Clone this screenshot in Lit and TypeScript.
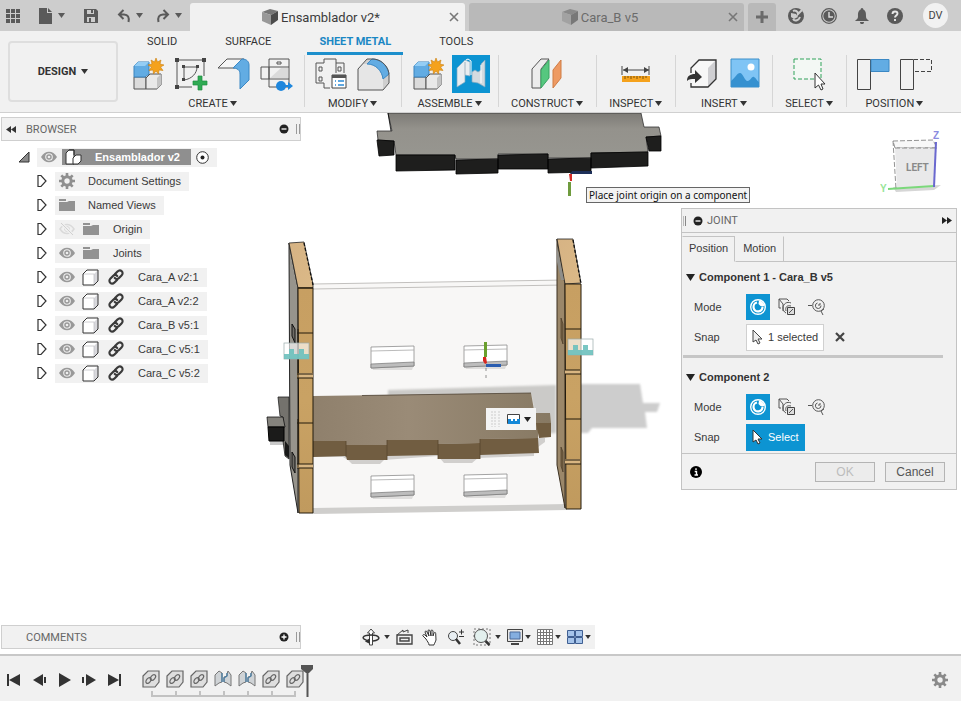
import { LitElement, html, svg, css, nothing, TemplateResult } from "lit";
import { customElement, state, property } from "lit/decorators.js";
import { classMap } from "lit/directives/class-map.js";

const icon = (w: number, h: number, body: unknown) => html`<svg
  width=${w} height=${h} viewBox="0 0 ${w} ${h}" fill="none" aria-hidden="true">${body}</svg>`;

const caret = html`<svg width="7" height="5" viewBox="0 0 7 5" aria-hidden="true"><path d="M0 0h7L3.500 5z" fill="currentColor"/></svg>`;

/* ---------- ribbon icons, drawn in a 38 x 38 box ---------- */

const newComponent = svg`
  <path d="M5 22v12h12V22z" fill="#dcdcdc" stroke="#555"/>
  <path d="M17 23l4-4h11v11l-4 4H17z" fill="#e9e9e9" stroke="#555"/>
  <path d="M28 34V23l4-4v11z" fill="#c4c4c4"/>
  <path d="M5 11l4-4h11v12l-4 3H5z" fill="#62ace3" stroke="#3a83bd"/>
  <path d="M5 11l4-4h11l-4 4z" fill="#94cdf4"/>
  <path d="M27 3l1.500 4 3.500-2-1 4 4 1-3.500 2 2.500 3.500-4-.5-.5 4-2.500-3-2.500 3-.5-4-4 .5 2.500-3.500-3.500-2 4-1-1-4 3.500 2z" fill="#f5a21c" stroke="#c97f10" stroke-width=".6"/>`;

const createSketch = svg`
  <path d="M5 5h27M5 5v27M32 5v16M5 32h15" stroke="#555"/>
  <path d="M12 25V12h13c0 6-5 12-13 13" stroke="#555"/>
  <g fill="#444"><path d="M3 3h4v4H3zM30 3h4v4h-4zM3 30h4v4H3zM10 10h3v3h-3zM24 10h3v3h-3zM10 23h3v3h-3z"/></g>
  <path d="M26 21h4v5h5v4h-5v5h-4v-5h-5v-4h5z" fill="#2fab53" stroke="#1e8c3f" stroke-width=".7"/>`;

const flange = svg`
  <path d="M3 13L12 4h17l-9 9z" fill="#f6f6f6" stroke="#555"/>
  <path d="M18 13l9-9c5 0 7 3 7 6v15l-9 9V19c0-4-3-6-7-6z" fill="#62ace3" stroke="#3b88c4"/>`;

const flatPattern = svg`
  <path d="M3 12h8v12H3zM11 4h20v28H11zM11 12h20M11 24h20" stroke="#555"/>
  <path d="M12 23l11-10h7v10z" fill="#dadada"/>
  <path d="M19 7h4v2h-4z" stroke="#555"/>
  <circle cx="23" cy="31" r="5" fill="#1f87dd"/><path d="M27 30h3v-3l5 4-5 4v-3h-3z" fill="#1f87dd"/>`;

const modifyRules = svg`
  <path d="M12 8V4h12v4h8v10M4 8h8M4 8v20h8v5h6M24 8v10" stroke="#555"/>
  <path d="M7 12h3v4H7zM7 22h3v4H7zM26 12h3v4h-3z" stroke="#555"/>
  <path d="M20 20h14v13H20z" fill="#fff" stroke="#444"/><path d="M20 20h14v3H20z" fill="#555"/>
  <path d="M23 26h1M26 26h6M23 30h1M26 30h6" stroke="#2a8ad6" stroke-width="1.500"/>`;

const fillet = svg`
  <path d="M3 14L12 4h7c9 1 15 9 15 16v8l-6 7H3z" fill="#cfcfcf"/>
  <path d="M3 14L8 9h4c9 0 15 7 16 15v11H3z" fill="#e6e6e6"/>
  <path d="M12 9l5-5c10 0 16 8 17 15l-6 5C27 16 21 9 12 9z" fill="#62ace3" stroke="#3b88c4"/>
  <path d="M3 14L12 4h7c9 1 15 9 15 16v8l-6 7H3z" stroke="#555"/>`;

const jointIcon = svg`
  <path d="M5 13l8-8 5 2v14l-5-1v7l-8 5z" fill="#e9edf0" stroke="#83a9c0" stroke-width=".7"/>
  <path d="M13 7v13" stroke="#9fb4c0"/>
  <path d="M33 32l-7-4-6-1V17l3-2 3 2 3-2V9l4-4z" fill="#d4dbe0" stroke="#83a9c0" stroke-width=".7"/>
  <path d="M29 10v18" stroke="#fff"/>
  <path d="M14 5l2-1 3 2v14" stroke="#fff"/>`;

const planeIcon = svg`
  <path d="M4 14L13 4h8l-8 10v19H4z" fill="#ececec" stroke="#555"/>
  <path d="M13 15l8-10v18l-8 10z" fill="#56c77f" stroke="#39a563"/>
  <path d="M25 15l8-10v18l-8 10z" fill="#ee9a63" stroke="#cf7c45"/>`;

const measure = svg`
  <path d="M5 11v9M32 11v9M6 15h26" stroke="#444"/>
  <path d="M6 15l5-3v6zM32 15l-5-3v6z" fill="#444"/>
  <path d="M5 21h28v6H5z" fill="#f5a21c"/>
  <path d="M8 21v3M11 21v2M14 21v3M17 21v2M20 21v3M23 21v2M26 21v3M29 21v2" stroke="#7d5208"/>`;

const insertDerive = svg`
  <path d="M8 13l8-8h17v19l-8 8H8z" fill="#f7f7f7"/>
  <path d="M25 32V13l8-8v19z" fill="#cfcfd2"/>
  <path d="M8 18v-5l8-8h17v19l-8 8H8v-4" stroke="#333" stroke-width="1.300"/>
  <path d="M4 26c0-5 3-7 8-7v-4l7 7-7 6v-4c-4 0-6 0-8 2z" fill="#333"/>`;

const canvasIcon = svg`
  <path d="M5 4h28v28H5z" fill="#7fc4f5" stroke="#3c8fc9"/>
  <circle cx="25" cy="12" r="3.500" fill="#fff"/>
  <path d="M5 26c4-3 6-8 9-8s5 9 8 8 4-5 6-4 3 4 5 5v5H5z" fill="#3691d0"/>`;

const selectIcon = svg`
  <path d="M4 4h27v20H4z" fill="#f3f8f4" stroke="#31a35a" stroke-dasharray="4 2"/>
  <path d="M25 18v15l3.500-3 2.500 5 2-1-2-5h4z" fill="#fff" stroke="#333"/>`;

const capturePos = svg`<path d="M3.500 4.500h13v30h-13z" stroke="#444"/><path d="M17 4.500h18v12H17z" fill="#62ace3" stroke="#3b88c4"/>`;
const revertPos = svg`<path d="M3.500 4.500h13v30h-13z" stroke="#444"/><path d="M17 4.500h17.500v12H17" stroke="#444" stroke-dasharray="4 2"/>`;

interface Tool { name: string; art: TemplateResult; on?: boolean }
const groups: { label: string; tools: Tool[] }[] = [
  { label: "CREATE", tools: [
    { name: "New Component", art: newComponent }, { name: "Create Sketch", art: createSketch },
    { name: "Flange", art: flange }, { name: "Flat Pattern", art: flatPattern } ] },
  { label: "MODIFY", tools: [{ name: "Sheet Metal Rules", art: modifyRules }, { name: "Fillet", art: fillet }] },
  { label: "ASSEMBLE", tools: [{ name: "New Component", art: newComponent }, { name: "Joint", art: jointIcon, on: true }] },
  { label: "CONSTRUCT", tools: [{ name: "Offset Plane", art: planeIcon }] },
  { label: "INSPECT", tools: [{ name: "Measure", art: measure }] },
  { label: "INSERT", tools: [{ name: "Insert Derive", art: insertDerive }, { name: "Canvas", art: canvasIcon }] },
  { label: "SELECT", tools: [{ name: "Select", art: selectIcon }] },
  { label: "POSITION", tools: [{ name: "Capture Position", art: capturePos }, { name: "Revert Position", art: revertPos }] },
];

/* ---------- browser tree icons ---------- */

const eye = icon(16, 12, svg`<path d="M0 6c4-7 12-7 16 0-4 7-12 7-16 0z" fill="#999"/><circle cx="8" cy="6" r="3.300" stroke="#eee" stroke-width="1.100"/><circle cx="8" cy="6" r="1.300" fill="#eee"/>`);
const eyeOff = icon(16, 14, svg`<path d="M1 7c4-6 10-6 14 0-4 6-10 6-14 0z" stroke="#dadada" stroke-width="1.500"/><circle cx="8" cy="7" r="2.500" stroke="#dadada"/><path d="M2 1l12 12" stroke="#f0f0f0" stroke-width="3"/><path d="M2 1l12 12" stroke="#d0d0d0"/>`);
const folder = icon(16, 14, svg`<path d="M0 1h7v2H0zM0 4h8l2-1h6v10H0z" fill="#929292"/>`);
const gear = (size: number, color: string) => html`<svg width=${size} height=${size} viewBox="0 0 16 16" fill="none" aria-hidden="true">
  <circle cx="8" cy="8" r="4.200" stroke=${color} stroke-width="3"/>
  <path d="M8 0v3M8 13v3M0 8h3M13 8h3M2.300 2.300l2.200 2.200M11.500 11.500l2.200 2.200M2.300 13.700l2.200-2.200M11.500 4.500l2.200-2.200" stroke=${color} stroke-width="2.600"/></svg>`;
const body = icon(17, 17, svg`<path d="M1 5l4-4h11v11l-4 4H1z" fill="#fff"/><path d="M12 16V5l4-4v11z" fill="#d8d8dc"/><path d="M1 5h11v11" stroke="#c4c4c8" stroke-width=".8"/><path d="M1 5l4-4h11v11l-4 4H1z" stroke="#333"/>`);
const link = icon(16, 16, svg`<g stroke="#3a3a3a" stroke-width="2.200" stroke-linecap="round"><path d="M7 5l2.500-2.500c3-3 7 1 4 4L11 9c-1.500 1.500-3 1.200-4.200 0"/><path d="M9 11l-2.500 2.500c-3 3-7-1-4-4L5 7c1.500-1.500 3-1.200 4.200 0"/></g>`);
const assembly = icon(17, 16, svg`<path d="M1 4l3-3h5v14H1z" fill="#fff" stroke="#333"/><path d="M8 9l3-3h5v6l-3 3H8z" fill="#fff" stroke="#333"/><path d="M1 4l3-3h5v5" stroke="#333"/>`);
const twisty = icon(10, 14, svg`<path d="M1 1.500v11h3l5-5.500-5-5.500z" fill="#fff" stroke="#333" stroke-width="1.200"/>`);

type Glyph = "eye" | "off" | "folder" | "gear" | "body" | "link";
const glyphs: Record<Glyph, TemplateResult> = { eye, off: eyeOff, folder, gear: gear(16, "#8f8f8f"), body, link };
const part = (label: string) => ({ label, glyphs: ["eye", "body", "link"] as Glyph[] });
const nodes: { label: string; glyphs: Glyph[] }[] = [
  { label: "Document Settings", glyphs: ["gear"] },
  { label: "Named Views", glyphs: ["folder"] },
  { label: "Origin", glyphs: ["off", "folder"] },
  { label: "Joints", glyphs: ["eye", "folder"] },
  part("Cara_A v2:1"), part("Cara_A v2:2"), part("Cara_B v5:1"), part("Cara_C v5:1"), part("Cara_C v5:2"),
];

const base = css`
  button, a { font: inherit; color: inherit; }
  button { margin: 0; padding: 0; border: 0; background: none; cursor: pointer; display: inline-flex; align-items: center; justify-content: center; }
  svg { display: block; flex: none; }
  * { box-sizing: border-box; }
`;

/* ---------- title bar ---------- */

@customElement("title-bar")
export class TitleBar extends LitElement {
  static styles = [base, css`
    :host { display: flex; height: 31px; background: #cdcdcd; color: #5a5a5a; font-size: 13px; }
    .quick { width: 190px; display: flex; align-items: center; padding-left: 6px; flex: none; }
    .quick button { height: 24px; gap: 5px; }
    .grid { margin-right: 18px; }
    .file { margin-right: 19px; }
    .save { margin-right: 19px; }
    .undo { margin-right: 13px; }
    .tabs { flex: 1; display: flex; gap: 4px; padding-top: 3px; min-width: 0; }
    .tab { flex: 1; display: flex; align-items: center; border-radius: 3px 3px 0 0; background: #b9b9b9; color: #6b6b6b; padding: 0 6px 0 4px; min-width: 0; }
    .tab.on { background: #f1f1f1; color: #3c3c3c; }
    .name { flex: 1; gap: 3px; white-space: nowrap; }
    .close { width: 11px; height: 20px; }
    .right { width: 217px; flex: none; display: flex; align-items: center; padding-left: 4px; }
    .add { width: 28px; height: 28px; align-self: flex-end; background: #b9b9b9; border-radius: 3px 3px 0 0; margin-right: 11px; }
    .right .i { width: 18px; height: 24px; margin-right: 15px; }
    .who { width: 25px; height: 25px; border-radius: 50%; background: #f1f1f1; font-size: 11px; margin-left: 4px; color: #444; }
  `];
  render() {
    const cube = (a: string, b: string, c: string) => icon(16, 16, svg`<path d="M0 3l8-3 8 2-7 4z" fill=${a}/><path d="M0 3l9 3v10l-9-4z" fill=${b}/><path d="M9 6l7-4v9l-7 5z" fill=${c}/>`);
    const x = icon(10, 10, svg`<path d="M1 1l8 8M9 1L1 9" stroke="#777" stroke-width="1.600"/>`);
    return html`
      <div class="quick">
        <button class="grid" aria-label="Data panel">${icon(14, 14, svg`<path d="M0 0h4v4H0zM5 0h4v4H5zM10 0h4v4h-4zM0 5h4v4H0zM5 5h4v4H5zM10 5h4v4h-4zM0 10h4v4H0zM5 10h4v4H5zM10 10h4v4h-4z" fill="#5a5a5a"/>`)}</button>
        <button class="file" aria-label="File">${icon(15, 16, svg`<path d="M1 0h8v5h5v11H1zM10 0l4 4h-4z" fill="#5a5a5a"/>`)}${caret}</button>
        <button class="save" aria-label="Save">${icon(14, 14, svg`<path d="M0 0h12l2 2v12H0z" fill="#5a5a5a"/><path d="M3 1h7v4H3zM3 8h8v5H3z" fill="#cdcdcd"/><path d="M7 1h2v3H7zM5 9h2v4H5z" fill="#5a5a5a"/>`)}</button>
        <button class="undo" aria-label="Undo">${icon(14, 14, svg`<path d="M6.500 1L2 5.500 6.500 10M2 5.500h5c4 0 5.500 3 4.500 7.500" stroke="#5a5a5a" stroke-width="2"/>`)}${caret}</button>
        <button aria-label="Redo">${icon(14, 14, svg`<path d="M7.500 1L12 5.500 7.500 10M12 5.500H7C3 5.500 1.500 8.500 2.500 13" stroke="#5a5a5a" stroke-width="2"/>`)}${caret}</button>
      </div>
      <div class="tabs">
        <div class="tab on"><button class="name">${cube("#777", "#999", "#4c4c4c")}Ensamblador v2*</button><button class="close" aria-label="Close Ensamblador v2">${x}</button></div>
        <div class="tab"><button class="name">${cube("#8a8a8a", "#a2a2a2", "#787878")}Cara_B v5</button><button class="close" aria-label="Close Cara_B v5">${x}</button></div>
      </div>
      <div class="right">
        <button class="add" aria-label="New design">${icon(14, 14, svg`<path d="M7 1v12M1 7h12" stroke="#6b6b6b" stroke-width="3"/>`)}</button>
        <button class="i" aria-label="Extensions">${icon(16, 16, svg`<circle cx="8" cy="8" r="8" fill="#5a5a5a"/><path d="M5 3c2-1 5 0 5 3l4-4M5 11c2 3 6 1 7-2" stroke="#cdcdcd" stroke-width="2"/><path d="M3 5l5 1 2 3-4 2-3-2z" fill="#cdcdcd"/>`)}</button>
        <button class="i" aria-label="Job status">${icon(16, 16, svg`<circle cx="8" cy="8" r="7.300" stroke="#5a5a5a" stroke-width="1.300"/><circle cx="8" cy="8" r="5.700" fill="#5a5a5a"/><path d="M8 4v5h4" stroke="#ddd" stroke-width="1.400"/>`)}</button>
        <button class="i" aria-label="Notifications">${icon(16, 16, svg`<path d="M8 0c1 0 1.300 1 1.300 1.500C12 3 12 5 12 8s1 3 3 5H1c2-2 3-2 3-5s0-5 2.700-6.500C6.700 1 7 0 8 0zM6 14h4c0 3-4 3-4 0z" fill="#5a5a5a"/>`)}</button>
        <button class="i" aria-label="Help">${icon(16, 16, svg`<circle cx="8" cy="8" r="8" fill="#5a5a5a"/><path d="M5.500 6c0-3.500 5-3 5-.5 0 2-2.500 2-2.500 4M8 11v2" stroke="#e6e6e6" stroke-width="1.900"/>`)}</button>
        <button class="who">DV</button>
      </div>`;
  }
}

/* ---------- ribbon ---------- */

@customElement("tool-ribbon")
export class ToolRibbon extends LitElement {
  @state() private tab = "SHEET METAL";
  static styles = [base, css`
    :host { display: flex; background: #f1f1f1; border-bottom: 1px solid #d0d0d0; font-size: 11px; color: #333; height: 82px; }
    .design { margin: 10px 4px 0 8px; width: 110px; height: 61px; flex: none; border: 2px solid #dedede; border-radius: 4px; font-weight: 700; gap: 5px; }
    .main { flex: 1; min-width: 0; }
    nav { display: flex; gap: 24px; padding-left: 13px; }
    nav button { height: 24px; padding: 0 12px; border-bottom: 3px solid transparent; white-space: nowrap; }
    nav button.on { color: #1a87c4; font-weight: 700; border-color: #1c8fcc; }
    .groups { display: flex; }
    .group { display: flex; flex-direction: column; align-items: center; padding: 0 8px 0 7px; border-right: 1px solid #d6d6d6; height: 52px; }
    .group:last-child { border: 0; }
    .tools { display: flex; gap: 5px; }
    .tools button { width: 38px; height: 38px; }
    .tools button.on { background: #0d94d2; }
    .label { height: 20px; flex: none; padding: 0 5px; gap: 2px; white-space: nowrap; }
  `];
  render() {
    return html`
      <button class="design">DESIGN ${caret}</button>
      <div class="main">
        <nav>${["SOLID", "SURFACE", "SHEET METAL", "TOOLS"].map(t => html`
          <button class=${classMap({ on: t === this.tab })} @click=${() => (this.tab = t)}>${t}</button>`)}</nav>
        <div class="groups">${groups.map(g => html`
          <div class="group">
            <div class="tools">${g.tools.map(t => html`<button class=${classMap({ on: !!t.on })} aria-label=${t.name}>${icon(38, 38, t.art)}</button>`)}</div>
            <button class="label">${g.label} ${caret}</button>
          </div>`)}</div>
      </div>`;
  }
}

/* ---------- browser ---------- */

@customElement("panel-bar")
export class PanelBar extends LitElement {
  @property() label = "";
  @property({ type: Boolean }) open = false;
  static styles = [base, css`
    :host { display: flex; align-items: center; height: 24px; width: 300px; margin-left: 1px; background: #f1f1f1; border: 1px solid #cfcfcf; font-size: 11px; color: #666; }
    .fold { width: 24px; height: 20px; padding-right: 6px; }
    .label { flex: 1; }
    .grip { width: 4px; height: 10px; border: solid #999; border-width: 0 1px; margin: 0 0 0 7px; }
  `];
  render() {
    return html`
      <button class="fold" aria-label="Collapse">${this.open ? icon(10, 7, svg`<path d="M5 0v7L0 3.500zM10 0v7L5 3.500z" fill="#333"/>`) : nothing}</button>
      <span class="label">${this.label}</span>
      <button aria-label="Toggle">${icon(10, 10, svg`<circle cx="5" cy="5" r="4.500" fill="#222"/><path d=${this.open ? "M2.500 5h5" : "M2.500 5h5M5 2.500v5"} stroke="#fff" stroke-width="1.300"/>`)}</button>
      <span class="grip"></span>`;
  }
}

@customElement("browser-tree")
export class BrowserTree extends LitElement {
  static styles = [base, css`
    :host { display: block; font: 11px/20px "Liberation Sans", Arial, sans-serif; color: #3a3a3a; padding-top: 4px; }
    ul { list-style: none; margin: 0; padding: 0; }
    li { display: flex; align-items: center; height: 24px; padding-left: 37px; }
    li.root { padding-left: 18px; }
    .twist { width: 18px; justify-content: flex-start; }
    .root .twist { width: 19px; }
    .chip { display: flex; align-items: center; height: 19px; background: #f1f1f1; padding-right: 8px; }
    .cell { width: 25px; display: flex; justify-content: center; }
    .cell:first-child { width: 23px; }
    .text { padding-left: 10px; white-space: nowrap; }
    .hot { display: flex; align-items: center; background: #8f8f8f; color: #fff; font-weight: 700; height: 16px; margin: 0 5px 0 2px; padding: 0 11px 0 3px; gap: 13px; }
  `];
  render() {
    return html`<ul>
      <li class="root"><button class="twist" aria-label="Collapse">${icon(12, 12, svg`<path d="M11 1v10H1z" fill="#8a8a8a" stroke="#333"/>`)}</button>
        <div class="chip"><span class="cell">${eye}</span><span class="hot">${assembly}Ensamblador v2</span>
        ${icon(13, 13, svg`<circle cx="6.500" cy="6.500" r="5.800" fill="#fff" stroke="#333"/><circle cx="6.500" cy="6.500" r="2" fill="#222"/>`)}</div></li>
      ${nodes.map(n => html`<li><button class="twist" aria-label="Expand">${twisty}</button>
        <div class="chip">${n.glyphs.map(g => html`<span class="cell">${glyphs[g]}</span>`)}<span class="text">${n.label}</span></div></li>`)}
    </ul>`;
  }
}

/* ---------- joint dialog ---------- */

@customElement("joint-dialog")
export class JointDialog extends LitElement {
  static styles = [base, css`
    :host { display: block; width: 276px; background: #f1f1f1; border: 1px solid #c3c3c3; font: 11px/16px "Liberation Sans", Arial, sans-serif; color: #3a3a3a; }
    header { display: flex; align-items: center; height: 24px; border-bottom: 1px solid #c3c3c3; font-family: Roboto, sans-serif; color: #666; padding: 0 4px 0 1px; gap: 4px; }
    .grip { width: 3px; height: 10px; border-right: 1px solid #888; border-left: 1px solid #bbb; margin-right: 3px; }
    .title { flex: 1; }
    .tabs { display: flex; height: 29px; padding-top: 3px; }
    .tabs button { padding: 0 7px 2px; border: 1px solid; border-color: transparent #c3c3c3 #c3c3c3 transparent; }
    .tabs button.on { padding: 0 6px 2px; border-color: #c3c3c3 #c3c3c3 transparent transparent; }
    .tabs span { flex: 1; border-bottom: 1px solid #c3c3c3; }
    h3 { margin: 0; font-size: 11px; line-height: 30px; display: flex; align-items: center; gap: 4px; padding-left: 4px; color: #333; }
    .row { display: flex; align-items: center; height: 30px; padding-left: 12px; }
    .row > span { width: 52px; }
    .mode { width: 24px; height: 26px; margin-right: 6px; }
    .mode.on { background: #0d94d2; margin-right: 5px; }
    .pick { height: 27px; border: 1px solid #d0d0d0; background: #fff; padding: 0 5px; gap: 4px; }
    .pick.on { background: #0d94d2; border-color: #0d94d2; color: #fff; }
    .clear { margin-left: 11px; }
    hr { border: 0; height: 3px; background: #c6c6c6; margin: 3px 13px 4px 1px; }
    footer { display: flex; align-items: center; height: 36px; border-top: 1px solid #c3c3c3; padding: 0 11px 0 8px; gap: 10px; margin-top: 1px; font-size: 12px; }
    footer span { flex: 1; }
    footer button { width: 60px; height: 20px; border: 1px solid #b4b4b4; background: #ececec; color: #555; }
    footer button:disabled { color: #bcbcbc; }
  `];
  private section(title: string, selected: boolean) {
    const arrow = (fill: string, stroke: string) => icon(12, 16, svg`<path d="M1 1v12l3-2 2 4 2-1-2-4h4z" fill=${fill} stroke=${stroke}/>`);
    return html`
      <h3>${icon(9, 7, svg`<path d="M0 0h9L4.500 7z" fill="#222"/>`)}${title}</h3>
      <div class="row"><span>Mode</span>
        <button class="mode on" aria-label="Simple">${icon(18, 18, svg`<circle cx="9" cy="9" r="7.300" stroke="#fff" stroke-width="1.400"/><path d="M8 4.500a4.500 4.500 0 1 0 5.500 4" stroke="#fff" stroke-width="2.200"/><path d="M10 2.500a6.500 6.500 0 0 1 5.500 5.500h-4l-2-2z" fill="#fff"/>`)}</button>
        <button class="mode" aria-label="Between two faces">${icon(18, 18, svg`<path d="M5 13V6L1 1h8l2 2M1 1v9h2" stroke="#555"/><path d="M13 5c-4-2-8 1-8 5 0 2 1 4 3 5M13 8c-4-1-6 1-5 5" stroke="#555"/><path d="M9.500 9.500h7v7h-7z" fill="#ddd" stroke="#444"/><path d="M11 15l4-4" stroke="#555"/>`)}</button>
        <button class="mode" aria-label="Two edge intersection">${icon(18, 18, svg`<circle cx="10.500" cy="7.500" r="5.800" stroke="#555"/><path d="M9.500 5a2.800 2.800 0 1 0 3.500 2.500M10 7h2V5M0 7.500h4M16 11l-3 2 2 4" stroke="#555"/>`)}</button>
      </div>
      <div class="row"><span>Snap</span>
        ${selected
          ? html`<button class="pick">${arrow("#eee", "#444")}1 selected</button><button class="clear" aria-label="Clear selection">${icon(10, 10, svg`<path d="M1 1l8 8M9 1L1 9" stroke="#444" stroke-width="2.200"/>`)}</button>`
          : html`<button class="pick on">${arrow("#fff", "#333")}Select</button>`}
      </div>`;
  }
  render() {
    return html`
      <header><span class="grip"></span>${icon(10, 10, svg`<circle cx="5" cy="5" r="4.500" fill="#222"/><path d="M2.500 5h5" stroke="#fff" stroke-width="1.300"/>`)}
        <span class="title">JOINT</span>${icon(10, 7, svg`<path d="M0 0v7l5-3.500zM5 0v7l5-3.500z" fill="#222"/>`)}</header>
      <div class="tabs"><button class="on">Position</button><button>Motion</button><span></span></div>
      ${this.section("Component 1 - Cara_B v5", true)}
      <hr>
      ${this.section("Component 2", false)}
      <footer>${icon(12, 12, svg`<circle cx="6" cy="6" r="6" fill="#000"/><path d="M6 2.300v1.700M4.700 5.500H6.500V9M4.500 9h3.500" stroke="#fff" stroke-width="1.400"/>`)}<span></span>
        <button disabled>OK</button><button>Cancel</button></footer>`;
  }
}

/* ---------- 3D scene ---------- */

@customElement("model-scene")
export class ModelScene extends LitElement {
  static styles = css`
    :host { display: block; }
    svg { display: block; width: 100%; height: 100%; }
  `;
  private opening(x: number, y: number) {
    return svg`<path d="M${x} ${y + 19}h43l-2 5h-39z" fill="#dedddc"/>
      <path d="M${x} ${y + 1}L${x + 43} ${y}V${y + 20}L${x} ${y + 22}z" fill="#fff" stroke="#8d8d8d" stroke-width=".8"/>
      <path d="M${x} ${y + 18}L${x + 43} ${y + 16}V${y + 20}L${x} ${y + 22}z" fill="#bdbdbd" stroke="#777" stroke-width=".7"/>
      <path d="M${x} ${y + 5}L${x + 43} ${y + 4}" stroke="#aaa" stroke-width=".8"/>`;
  }
  private badge(x: number, y: number) {
    return svg`<rect x=${x} y=${y} width="25" height="16" fill="#fff" fill-opacity=".65" stroke="#9aa" stroke-width=".7"/>
      <path d="M${x} ${y + 11}h5v-5h5v5h5v-5h5v5h5v5h-25z" fill="#6cc0bd" fill-opacity=".9"/>`;
  }
  render() {
    return html`<svg viewBox="0 113 961 542" preserveAspectRatio="xMinYMin slice" role="img" aria-label="Assembly model">
      <defs>
        <linearGradient id="plate" x1="0" y1="0" x2="0" y2="1"><stop offset="0" stop-color="#7d7b76"/><stop offset=".35" stop-color="#94928c"/><stop offset="1" stop-color="#979690"/></linearGradient>
        <linearGradient id="wood" x1="0" y1="0" x2="0" y2="1"><stop offset="0" stop-color="#c79f62"/><stop offset=".5" stop-color="#c9a264"/><stop offset="1" stop-color="#c09a5e"/></linearGradient>
        <linearGradient id="cap" x1="0" y1="0" x2="1" y2="1"><stop offset="0" stop-color="#d6b384"/><stop offset="1" stop-color="#dbb987"/></linearGradient>
        <linearGradient id="mid" x1="0" y1="0" x2="1" y2="0"><stop offset="0" stop-color="#8f806c"/><stop offset=".4" stop-color="#9a8b77"/><stop offset="1" stop-color="#877963"/></linearGradient>
        <filter id="soft" x="-10%" y="-10%" width="120%" height="120%"><feGaussianBlur stdDeviation="1.200"/></filter>
      </defs>

      <path d="M388 113L392 131H377L378 140L394 141L396 155H455L456 159H498V154H548V158H591V153L648 152L646 137L661 136L659 127H644L641 113z" fill="url(#plate)" stroke="#333" stroke-width=".8"/>
      <g fill="#1e1e1d" stroke="#000" stroke-width=".8">
        <path d="M377 140L394 141V155L379 156zM646 137L661 136V151H649z"/>
        <path d="M396 155L455 155V170L396 171zM456 160L498 159V173L456 174zM498 155L548 154V169H498zM548 159L591 158V172L548 173zM591 153L648 152V166L591 168z"/>
        <path d="M388 113L391 131"/>
      </g>
      <path d="M572 171H592V174H570z" fill="#1d2f58"/><path d="M569 174l3 0v7h-2z" fill="#d42c28"/><path d="M568 182h3v14h-3z" fill="#6f9b3e"/>

      <path d="M390 388L555 384H640L643 403H660L657 412H645L647 428H592L588 433H556L545 434V395H390z" fill="#cdcdcd" filter="url(#soft)"/>
      <path d="M270 441H284V445H270z" fill="#c9c9c9"/>
      <path d="M313 284L565 280L567 505L313 509z" fill="#f8f7f6"/>
      <path d="M313 284L565 280M313 289L565 285" stroke="#c2c0be"/>
      <path d="M313 508L567 504V510L313 514z" fill="#cfcecc"/>
      <path d="M388 390L556 385V433L540 434L530 394L388 396z" fill="#cbcac8" filter="url(#soft)"/>
      <path d="M313 457H343L348 460L352 464H380L384 460L438 456L444 463H472L478 458L534 456V450L545 442V438H313z" fill="#d1cfcd"/>

      ${this.opening(371, 346)}${this.opening(464, 345)}${this.opening(371, 475)}${this.opening(464, 474)}

      <path d="M313 396L531 393L534 410L536 413H550L551 423L538 425V438L480 439V443L438 444V440H387V445H346V441H313z" fill="url(#mid)"/>
      <path d="M313 441H346V445H387V440H438V444L480 443V439L538 438L539 453L480 455V459L438 459V455L387 456V460H347L346 456L313 457z" fill="#715d41"/>
      <path d="M536 423H551V437L539 438z" fill="#715d41"/>
      <path d="M346 441V457M387 440V460M438 440V459M480 439V459" stroke="#57452c" stroke-width=".8"/>
      <path d="M362 395.500L531 393" stroke="#4f4436" stroke-width=".8"/>

      <path d="M278 397H289V459L285 456L283 441V417L280 416z" fill="#74726d" stroke="#222" stroke-width=".8"/>
      <path d="M267 417H283L285 427H268z" fill="#85837d" stroke="#111" stroke-width=".8"/>
      <path d="M268 427H284V441H269z" fill="#1b1b1a" stroke="#000"/>
      <path d="M285 441l4 5v12l-4-3z" fill="#181818"/>

      <path d="M289 243L298 288V513L290 465z" fill="#97948c" stroke="#222"/>
      <path d="M289 243L304 242L313 284V288H298z" fill="url(#cap)" stroke="#222" stroke-width=".8"/>
      <path d="M298 288H313V513H299z" fill="url(#wood)" stroke="#221a0d"/>
      <path d="M297 373H313V378H297zM297 464H313V468H297z" fill="#d9b682"/>
      <path d="M298 288H313M297 333H313M297 374H313M297 378H313M297 423H313M297 464H313M297 468H313M298 329V378M298 419V467" stroke="#221a0d"/>
      <path d="M304 243L313 285" stroke="#111" stroke-width="1.300" stroke-dasharray="3 2"/>
      <path d="M292 324l3 5v14l-3-7zM292 452l3 5v16l-3-6z" fill="#6f6c66" stroke="#111"/>

      <path d="M557 239L565 284V508L557 465z" fill="#9b8769" stroke="#3a2f20"/>
      <path d="M557 239H573L581 283L565 284z" fill="url(#cap)" stroke="#222" stroke-width=".8"/>
      <path d="M557 246L564 280H561L557 262z" fill="#8f8e8a"/>
      <path d="M565 284H581V509H566z" fill="url(#wood)" stroke="#221a0d"/>
      <path d="M565 370H580V374H565zM565 459H580V464H565z" fill="#d9b682"/>
      <path d="M565 329H581M565 370H580M565 374H581M565 419H581M565 460H580M565 464H581" stroke="#221a0d"/>
      <path d="M573 240L581 284" stroke="#111" stroke-width="1.300" stroke-dasharray="3 2"/>
      <path d="M561 318l2 6v20l-2-6zM561 447l2 5v20l-2-6z" fill="#776448" stroke="#4a3b26" stroke-width=".7"/>

      ${this.badge(284, 343)}${this.badge(568, 339)}

      <path d="M484 342h3v15h-3z" fill="#6a9f2d"/><path d="M483 357h3l1 6-2 1-2-3z" fill="#d8261f"/><path d="M486 364h15v3h-15z" fill="#2a5db0"/>
      <path d="M486 368v14" stroke="#777" stroke-width=".8" stroke-dasharray="3 4"/>
    </svg>`;
  }
}

/* ---------- navigation bar ---------- */

const navItems: { name: string; art: TemplateResult; menu?: "wide" | "near" }[] = [
  { name: "Orbit", menu: "wide", art: svg`<path d="M7.500 17V5h-2L9 1l3.500 4h-2v12z" fill="#fff" stroke="#444"/><path d="M7 13c-9-2-7-6 2-6s11 5 2 6" stroke="#333" stroke-width="1.500"/><path d="M3 13.500l5-3.500v6z" fill="#333"/>` },
  { name: "Look At", art: svg`<path d="M2 7h15v9H2zM5 10h9v3H5z" stroke="#444" stroke-width="1.400"/><path d="M2 7l6-5v2l5-2v3" stroke="#444"/>` },
  { name: "Pan", art: svg`<path d="M5 11L2 8c-1-1 1-2 2-1l2 2-2-5c0-1 1.500-1.500 2 0l2 4-1-5c0-1.500 1.700-1.500 2 0l1 5V3c0-1.300 1.700-1.300 2 0v5l1-3c.5-1 2-.5 1.700.5L15 12c-1 3-2 4-2 5H8c0-2-2-4-3-6z" fill="#fff" stroke="#333"/>` },
  { name: "Zoom", art: svg`<circle cx="6" cy="8" r="4.500" fill="#e8eef2" stroke="#444"/><path d="M9 11l4 5" stroke="#333" stroke-width="2.500"/><path d="M12 4h5M14.500 1.500v5M12 8.500h5" stroke="#333"/>` },
  { name: "Fit", menu: "wide", art: svg`<path d="M1 1h16v16H1z" stroke="#777" stroke-dasharray="2 2"/><circle cx="8" cy="8" r="6.500" fill="#e3f0ee" stroke="#555"/><path d="M12.500 13l4 4" stroke="#333" stroke-width="2.500"/>` },
  { name: "Display Settings", menu: "near", art: svg`<path d="M1.500 1.500h15v12h-15z" fill="#e6e6e6" stroke="#444"/><path d="M4 4h10v7H4z" fill="#84aee0" stroke="#4a6b9c"/><path d="M5 16h8" stroke="#444" stroke-width="2"/>` },
  { name: "Grid and Snaps", menu: "near", art: svg`<path d="M1.500 1.500h15v15h-15z" fill="#fff"/><path d="M1.500 1.500h15v15h-15zM4.500 1v16M7.500 1v16M10.500 1v16M13.500 1v16M1 4.500h16M1 7.500h16M1 10.500h16M1 13.500h16" stroke="#777"/>` },
  { name: "Viewports", menu: "near", art: svg`<path d="M1.500 2.500h7v6h-7zM9.500 2.500h7v6h-7zM1.500 9.500h7v6h-7zM9.500 9.500h7v6h-7z" fill="#a6c4ea" stroke="#3f5f92"/>` },
];

@customElement("nav-bar")
export class NavBar extends LitElement {
  static styles = [base, css`
    :host { display: flex; align-items: center; height: 24px; background: #f1f1f1; color: #333; padding: 0 4px 0 2px; gap: 5px; }
    button { height: 22px; margin-right: 3px; }
    .wide { gap: 4px; margin-right: 0; }
    .near { gap: 1px; margin-right: 0; }
    button svg + svg { width: 6px; height: 4px; }
  `];
  render() {
    return navItems.map(n => html`<button class=${n.menu ?? ""} aria-label=${n.name}>${icon(18, 18, n.art)}${n.menu ? caret : nothing}</button>`);
  }
}

/* ---------- timeline ---------- */

@customElement("time-line")
export class TimeLine extends LitElement {
  static styles = [base, css`
    :host { display: flex; align-items: flex-start; height: 47px; border-top: 2px solid #c8c8c8; background: #f1f1f1; padding: 9px 13px 0 6px; }
    .play { display: flex; gap: 9px; padding-top: 7px; }
    .play button { width: 16px; height: 16px; }
    .track { margin-left: 17px; width: 168px; }
    .steps { display: flex; padding: 4px 0 2px; }
    .steps button { width: 24px; height: 20px; }
    .mark { margin-left: -6px; }
    .cog { margin-left: auto; padding-top: 7px; }
  `];
  render() {
    const play = [
      ["Start", "M2 2v12", "M14 2v12L3 8z"], ["Back", "M14 5v6", "M12 2v12L2 8z"], ["Play", "", "M3 1v14l12-7z"],
      ["Forward", "M2 5v6", "M5 2v12l10-6z"], ["End", "M14 2v12", "M2 2v12l11-6z"],
    ];
    const linked = svg`<path d="M1 6l5-5h11v11l-4 5H1z" fill="#dedede" stroke="#666" stroke-width="1.200"/><g stroke="#666" stroke-width="1.200"><ellipse cx="6.500" cy="10.500" rx="2" ry="3.300" transform="rotate(40 6.500 10.500)"/><ellipse cx="11" cy="7.500" rx="2" ry="3.300" transform="rotate(40 11 7.500)"/></g>`;
    const joint = svg`<path d="M1 5l4-4 3 2v9l-3 1-4 3z" fill="#cfd3d6" stroke="#777"/><path d="M17 16l-4-3-3-1V7l3-1V4l1-3 3 4z" fill="#cfd3d6" stroke="#777"/><path d="M8 3v9M10 12V8l3-2V3" stroke="#4a7fa6" stroke-width="1.300"/>`;
    return html`
      <div class="play">${play.map(([n, bar, tri]) => html`<button aria-label=${n}>${icon(16, 16, svg`<path d=${bar} stroke="#333" stroke-width="2"/><path d=${tri} fill="#333"/>`)}</button>`)}</div>
      <div class="track">
        <div class="steps">${[0, 0, 0, 1, 1, 0, 0].map((k, i) => html`<button aria-label="Feature ${i + 1}">${icon(18, 18, k ? joint : linked)}</button>`)}</div>
        ${icon(168, 6, svg`<path d="M13 0v5h143V0M37 0v5M61 0v5M85 0v5M109 0v5M133 0v5" stroke="#c2c2c2" stroke-width="2"/>`)}
      </div>
      <div class="mark">${icon(13, 32, svg`<path d="M0 0h12v4L8 8H5L0 4z" fill="#555"/><path d="M6.500 5v27" stroke="#555" stroke-width="2"/>`)}</div>
      <button class="cog" aria-label="Settings">${gear(16, "#8a8a8a")}</button>`;
  }
}

/* ---------- page ---------- */

@customElement("app-root")
export class AppRoot extends LitElement {
  static styles = [base, css`
    :host { display: flex; flex-direction: column; min-height: 100vh; background: #fff; font-family: Roboto, "Liberation Sans", sans-serif; }
    .view { position: relative; flex: 1; display: flex; flex-direction: column; justify-content: space-between; padding: 4px 0 5px; overflow: hidden; }
    .scene { position: absolute; inset: 0; }
    .side, .foot { position: relative; }
    .side { width: 301px; }
    .foot { display: flex; align-items: center; gap: 59px; }
    .joint { position: absolute; top: 95px; right: 4px; }
    .cube { position: absolute; top: 14px; right: 15px; font-family: "Liberation Sans", sans-serif; }
    .tip { position: absolute; top: 74px; left: 586px; height: 16px; padding: 0 2px; border: 1px solid #666; background: #f3f3f3; font: 10px/14px "Noto Sans", sans-serif; color: #111; white-space: nowrap; }
    .mini { position: absolute; top: 295px; left: 486px; width: 50px; height: 22px; background: #f4f4f4; gap: 4px; color: #222; }
  `];
  render() {
    return html`
      <title-bar></title-bar>
      <tool-ribbon></tool-ribbon>
      <main class="view">
        <model-scene class="scene"></model-scene>
        <div class="side"><panel-bar label="BROWSER" open></panel-bar><browser-tree></browser-tree></div>
        <div class="foot"><panel-bar label="COMMENTS"></panel-bar><nav-bar></nav-bar></div>
        <div class="cube">${icon(66, 70, svg`
          <path d="M13 60l3 5 38-2 7-5z" fill="#d6d6d6"/>
          <path d="M13 14l40-1 4 8H15z" fill="#f8f8f8" stroke="#777" stroke-width=".8" stroke-dasharray="5 2"/>
          <path d="M15 21h41l-2 39-37 2z" fill="#e9e9ea"/><path d="M15 21h41M13 14l3 48" stroke="#777" stroke-width=".8" stroke-dasharray="5 2"/>
          <path d="M8 62l46-3" stroke="#7bd87b" stroke-width="2"/><path d="M56 15l-2 45" stroke="#6a68cf" stroke-width="2"/>
          <text x="26" y="44" font-size="10" fill="#8a8a8a" font-weight="700" font-family="Roboto, sans-serif">LEFT</text>
          <text x="53" y="12" font-size="10" fill="#8b8be0" font-weight="700">Z</text>
          <text x="0" y="65" font-size="10" fill="#98e598" font-weight="700">Y</text>`)}</div>
        <div class="tip" role="tooltip">Place joint origin on a component</div>
        <button class="mini" aria-label="Joint options">${icon(12, 16, svg`<path d="M1 0v16M4 0v16M8 0v16" stroke="#ccc" stroke-dasharray="2 1"/>`)}${icon(13, 10, svg`<path d="M.5.5h12v9H.5z" fill="#fff" stroke="#444"/><path d="M1 5h3v2h2V5h2v2h2V5h3v5H1z" fill="#1488d8"/>`)}${caret}</button>
        <joint-dialog class="joint"></joint-dialog>
      </main>
      <time-line></time-line>`;
  }
}
